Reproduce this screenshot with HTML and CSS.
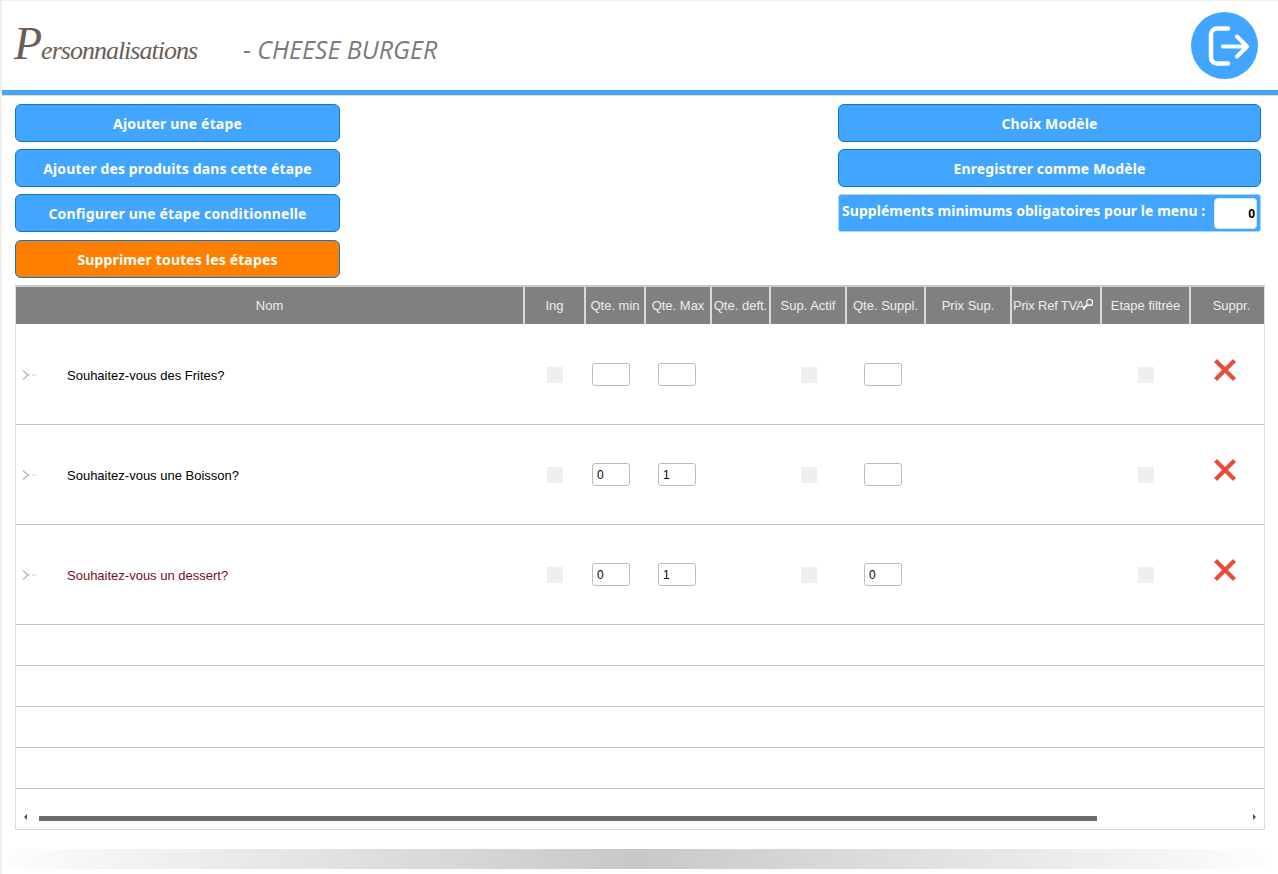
FILE: index.html
```html
<!DOCTYPE html>
<html lang="fr">
<head>
<meta charset="utf-8">
<title>Personnalisations</title>
<link rel="stylesheet" href="styles.css">
</head>
<body>
<div class="page">
  <header class="header">
    <div class="logo">Personnalisations</div>
    <h1 class="title">- CHEESE BURGER</h1>
    <a class="logout" href="#" aria-label="Quitter">
      <svg width="67" height="67" viewBox="0 0 67 67">
        <circle cx="33.5" cy="33.5" r="33.5" fill="#42a5ff"/>
        <path d="M37 16.5H26a6 6 0 0 0-6 6v23a6 6 0 0 0 6 6h11" fill="none" stroke="#fff" stroke-width="4.5" stroke-linecap="round"/>
        <path d="M32 34.5H55M46 24.5l10 10-10 10" fill="none" stroke="#fff" stroke-width="4" stroke-linecap="round" stroke-linejoin="round"/>
      </svg>
    </a>
  </header>
  <div class="toolbar">
    <div class="tools tools-left">
      <button class="btn">Ajouter une étape</button>
      <button class="btn">Ajouter des produits dans cette étape</button>
      <button class="btn">Configurer une étape conditionnelle</button>
      <button class="btn btn-danger">Supprimer toutes les étapes</button>
    </div>
    <div class="tools tools-right">
      <button class="btn">Choix Modèle</button>
      <button class="btn">Enregistrer comme Modèle</button>
      <div class="minimum">
        <span>Suppléments minimums obligatoires pour le menu :</span>
        <input class="minimum-input" value="0">
      </div>
    </div>
  </div>
  <section class="table">
    <div class="thead cols">
      <div class="th">Nom</div>
      <div class="th">Ing</div>
      <div class="th">Qte. min</div>
      <div class="th">Qte. Max</div>
      <div class="th">Qte. deft.</div>
      <div class="th">Sup. Actif</div>
      <div class="th">Qte. Suppl.</div>
      <div class="th">Prix Sup.</div>
      <div class="th th-search">Prix Ref TVA<svg class="search" width="12" height="12" viewBox="0 0 12 12"><circle cx="7.6" cy="4.4" r="3" fill="none" stroke="#fff" stroke-width="1.2"/><path d="M5.2 6.8 1.5 10.5" stroke="#fff" stroke-width="1.8"/></svg></div>
      <div class="th">Etape filtrée</div>
      <div class="th th-suppr">Suppr.</div>
    </div>

    <div class="row cols">
      <div class="td td-name">
        <svg class="chev" width="14" height="12" viewBox="0 0 14 12"><path d="M1 1.5 6 6 1 10.5M6 6h1.5M10 6h.8M12.5 6h.8" fill="none" stroke="#b8b8b8" stroke-width="1.4"/></svg>
        <span class="name">Souhaitez-vous des Frites?</span>
      </div>
      <div class="td pad-ing"><i class="check"></i></div>
      <div class="td pad-min"><input class="qty"></div>
      <div class="td pad-max"><input class="qty"></div>
      <div class="td"></div>
      <div class="td pad-sup"><i class="check"></i></div>
      <div class="td pad-suppl"><input class="qty"></div>
      <div class="td"></div>
      <div class="td"></div>
      <div class="td pad-etape"><i class="check"></i></div>
      <div class="td pad-del"><svg class="del" width="24" height="24" viewBox="0 0 24 24"><path d="M2.5 2.5l19 19M21.5 2.5l-19 19" stroke="#e74c3c" stroke-width="4.2"/></svg></div>
    </div>

    <div class="row cols">
      <div class="td td-name">
        <svg class="chev" width="14" height="12" viewBox="0 0 14 12"><path d="M1 1.5 6 6 1 10.5M6 6h1.5M10 6h.8M12.5 6h.8" fill="none" stroke="#b8b8b8" stroke-width="1.4"/></svg>
        <span class="name">Souhaitez-vous une Boisson?</span>
      </div>
      <div class="td pad-ing"><i class="check"></i></div>
      <div class="td pad-min"><input class="qty" value="0"></div>
      <div class="td pad-max"><input class="qty" value="1"></div>
      <div class="td"></div>
      <div class="td pad-sup"><i class="check"></i></div>
      <div class="td pad-suppl"><input class="qty"></div>
      <div class="td"></div>
      <div class="td"></div>
      <div class="td pad-etape"><i class="check"></i></div>
      <div class="td pad-del"><svg class="del" width="24" height="24" viewBox="0 0 24 24"><path d="M2.5 2.5l19 19M21.5 2.5l-19 19" stroke="#e74c3c" stroke-width="4.2"/></svg></div>
    </div>

    <div class="row cols">
      <div class="td td-name">
        <svg class="chev" width="14" height="12" viewBox="0 0 14 12"><path d="M1 1.5 6 6 1 10.5M6 6h1.5M10 6h.8M12.5 6h.8" fill="none" stroke="#b8b8b8" stroke-width="1.4"/></svg>
        <span class="name name-cond">Souhaitez-vous un dessert?</span>
      </div>
      <div class="td pad-ing"><i class="check"></i></div>
      <div class="td pad-min"><input class="qty" value="0"></div>
      <div class="td pad-max"><input class="qty" value="1"></div>
      <div class="td"></div>
      <div class="td pad-sup"><i class="check"></i></div>
      <div class="td pad-suppl"><input class="qty" value="0"></div>
      <div class="td"></div>
      <div class="td"></div>
      <div class="td pad-etape"><i class="check"></i></div>
      <div class="td pad-del"><svg class="del" width="24" height="24" viewBox="0 0 24 24"><path d="M2.5 2.5l19 19M21.5 2.5l-19 19" stroke="#e74c3c" stroke-width="4.2"/></svg></div>
    </div>

    <div class="row-empty"></div>
    <div class="row-empty"></div>
    <div class="row-empty"></div>
    <div class="row-empty"></div>

    <div class="scrollbar">
      <i class="arrow arrow-left"></i>
      <div class="track"><div class="thumb"></div></div>
      <i class="arrow arrow-right"></i>
    </div>
  </section>
  <div class="footer-band"></div>
</div>
</body>
</html>
```

FILE: styles.css
```css
* { box-sizing: border-box; }
html, body { margin: 0; padding: 0; background: #fff; }
body { width: 1278px; height: 874px; overflow: hidden; }
.page {
  height: 874px;
  border-top: 1px solid #eee;
  border-left: 2px solid #f0f0f0;
  font-family: "Liberation Sans", Arial, sans-serif;
}
.header {
  height: 89px;
  display: flex;
  align-items: center;
  padding: 0 20px 0 12px;
}
.logo {
  width: 229px;
  flex: none;
  font-family: "Liberation Serif", serif;
  font-style: italic;
  font-size: 26px;
  letter-spacing: -1px;
  color: #6a5e56;
  margin-top: -4px;
}
.logo::first-letter { font-size: 46px; }
.title {
  margin: 7px 0 0;
  font-family: "Open Sans", sans-serif;
  font-style: italic;
  font-weight: 400;
  font-size: 25px;
  color: #7a7a7a;
  flex: 1;
}
.logout { display: block; height: 67px; margin-top: -1px; }
.toolbar {
  border-top: 5px solid #42a5ff;
  box-shadow: inset 0 1px 0 #f3d9b0;
  padding: 9px 17px 0 13px;
  display: flex;
  justify-content: space-between;
}
.tools { display: flex; flex-direction: column; gap: 7px; }
.tools-left { width: 325px; }
.tools-right { width: 423px; }
.btn {
  height: 38px;
  background: #42a5ff;
  border: 1px solid #0a78d0;
  border-radius: 6px;
  color: #fff;
  font-family: "Noto Sans", sans-serif;
  font-weight: 700;
  font-size: 14px;
  letter-spacing: 0.15px;
  cursor: pointer;
}
.btn-danger { background: #ff8000; margin-top: 1px; }
.minimum {
  height: 38px;
  background: #42a5ff;
  border: 1px solid #a9d6ff;
  border-radius: 3px;
  display: flex;
  align-items: center;
  justify-content: space-between;
  padding: 0 3px;
  color: #fff;
  font-family: "Noto Sans", sans-serif;
  font-weight: 700;
  font-size: 14px;
  letter-spacing: 0.05px;
}
.minimum span { margin-top: -6px; white-space: nowrap; }
.minimum-input {
  width: 43px;
  height: 31px;
  border: 1px solid #d5eaff;
  border-radius: 4px;
  background: #fff;
  text-align: right;
  padding: 0 1px;
  font-family: "Noto Sans", sans-serif;
  font-weight: 700;
  font-size: 12px;
  color: #000;
  outline: none;
}
.table {
  width: 1250px;
  height: 545px;
  margin: 7px 0 0 13px;
  border: 1px solid #ddd;
  border-top: 2px solid #ccc;
  display: flex;
  flex-direction: column;
}
.cols {
  display: grid;
  grid-template-columns: 507px 59px 58px 64px 57px 74px 77px 84px 88px 87px 73px;
  column-gap: 2px;
}
.thead { height: 37px; background: #d8d8d8; flex: none; }
.th {
  background: #808080;
  color: #eee;
  font-size: 13px;
  display: flex;
  align-items: center;
  justify-content: center;
  white-space: nowrap;
  overflow: hidden;
}
.th-search { justify-content: flex-start; padding-left: 1px; letter-spacing: -0.2px; }
.search { flex: none; margin: -4px 0 0 -3px; }
.th-suppr { padding-left: 8px; }
.row {
  height: 100px;
  flex: none;
  border-bottom: 1px solid #c4c4c4;
}
.thead + .row { margin-top: 1px; }
.td { display: flex; align-items: center; font-size: 13px; color: #000; }
.td-name { padding-left: 6px; }
.chev { flex: none; margin-right: 31px; }
.name { margin-top: 2px; }
.name-cond { color: #7a0b1e; }
.check { display: block; width: 16px; height: 16px; background: #efefef; }
.qty {
  width: 38px;
  height: 23px;
  border: 1px solid #bbb;
  border-radius: 3px;
  background: #fff;
  padding: 0 0 0 4px;
  font-family: "Liberation Sans", Arial, sans-serif;
  font-size: 12px;
  color: #000;
  outline: none;
}
.pad-ing { padding-left: 22px; }
.pad-min { padding-left: 6px; }
.pad-max { padding-left: 12px; }
.pad-sup { padding-left: 30px; }
.pad-suppl { padding-left: 17px; }
.pad-etape { padding-left: 36px; }
.pad-del { padding-left: 22px; }
.del { margin-bottom: 9px; }
.row-empty { height: 41px; flex: none; border-bottom: 1px solid #c4c4c4; }
.scrollbar {
  flex: 1;
  display: flex;
  align-items: flex-end;
  padding: 0 8px 8px;
}
.track { flex: 1; height: 5px; padding: 0 156px 0 12px; }
.thumb { height: 5px; background: #6b6b6b; }
.arrow {
  display: block;
  width: 0;
  height: 0;
  border-top: 3px solid transparent;
  border-bottom: 3px solid transparent;
  margin-bottom: 1px;
}
.arrow-left { border-right: 3px solid #555; }
.arrow-right { border-left: 3px solid #555; }
.footer-band {
  width: 1260px;
  height: 20px;
  margin: 19px 0 0 3px;
  background: linear-gradient(90deg, #fdfdfd 0%, #c8c8c8 50%, #fdfdfd 100%);
}
```
